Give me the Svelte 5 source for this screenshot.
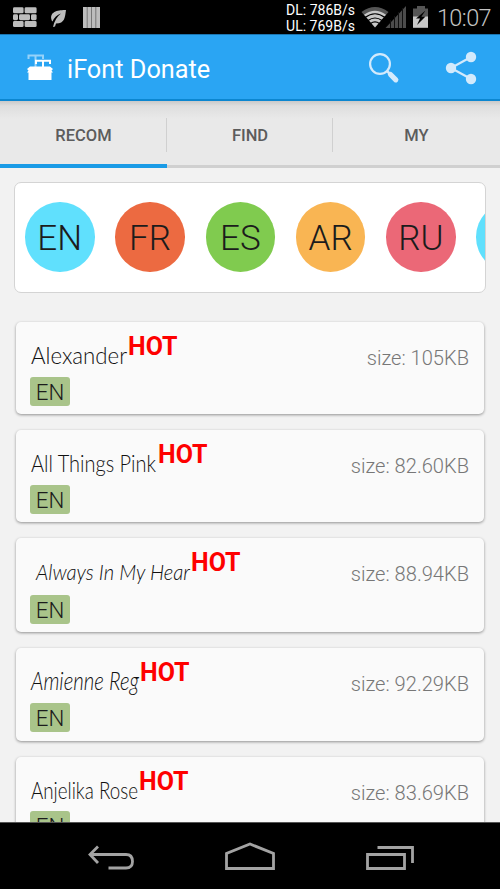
<script lang="ts">
  const tabs = ['RECOM', 'FIND', 'MY'];
  let active = $state(0);

  const languages = [
    { code: 'EN', color: 'cyan' },
    { code: 'FR', color: 'orange' },
    { code: 'ES', color: 'green' },
    { code: 'AR', color: 'amber' },
    { code: 'RU', color: 'pink' },
    { code: '', color: 'cyan' }
  ];

  // width is the measured width of the preview, row the height of its line
  const fonts = [
    { name: 'Alexander', face: 'light', size: '105KB', width: 97, text: 96, row: 55, height: 92 },
    { name: 'All Things Pink', face: 'marker', size: '82.60KB', width: 127, text: 125, row: 55, height: 92 },
    { name: 'Always In My Hear', face: 'script', size: '88.94KB', width: 160, text: 154, indent: 5, row: 57, height: 94 },
    { name: 'Amienne Reg', face: 'brush', size: '92.29KB', width: 109, text: 108, row: 55, height: 93 },
    { name: 'Anjelika Rose', face: 'narrow', size: '83.69KB', width: 108, text: 107, row: 54, height: 93 }
  ];
</script>

<div class="screen">
  <div class="status">
    <svg class="notifications" width="104" height="34" viewBox="0 0 104 34">
      <g fill="#bdbdbd">
        <rect x="13" y="7.3" width="10.6" height="6" rx="1.4" />
        <rect x="24.6" y="7.3" width="12" height="6" rx="1.4" />
        <rect x="13" y="14.2" width="5" height="6" rx="1.4" />
        <rect x="19" y="14.2" width="11" height="6" rx="1.4" />
        <rect x="31" y="14.2" width="5.6" height="6" rx="1.4" />
        <rect x="13" y="21.1" width="10.6" height="6" rx="1.4" />
        <rect x="24.6" y="21.1" width="12" height="6" rx="1.4" />
        <path d="M66 10C59 10 50 11 51.300 19Q51.700 21 52.500 21.500Q55 15.500 61 13.500Q55 18 53 27L55 26.500L56 23.500C65 23.500 65 17 66 10Z" />
        <rect x="83" y="7" width="17" height="21" />
      </g>
      <path d="M87.200 7V28M91.500 7V28M95.800 7V28" stroke="#777" stroke-width="1" />
    </svg>
    <div class="traffic">
      <span>DL: 786B/s</span>
      <span>UL: 769B/s</span>
    </div>
    <svg class="signals" width="72" height="34" viewBox="0 0 72 34">
      <path d="M.5 12Q14 2 27.500 12L24.500 15.500Q14 8 3.500 15.500Z" fill="#555" />
      <path d="M3 14.800Q14 6.500 25 14.800L14 27.500Z" fill="#c8c8c8" />
      <path d="M4 17.500Q14 10 24 17.500M7 20.500Q14 15.500 21 20.500M9.500 23.500Q14 20.300 18.500 23.500" fill="none" stroke="#000" stroke-width="1.200" />
      <path d="M45 6V28H24.500Z" fill="#4c4c4c" />
      <path d="M29.500 20V28M33.500 16V28M37.500 12V28M41.500 8V28" stroke="#111" stroke-width="1" />
      <path d="M56 6H64V8.500H67V17H52V8.500H56Z" fill="#555" />
      <rect x="52" y="16.500" width="15" height="11.300" fill="#c8c8c8" />
      <path d="M64.500 10.500L55 18.500H59L56 25L64.500 16.500H60.500Z" fill="#000" />
    </svg>
    <span class="clock">10:07</span>
  </div>

  <header>
    <svg class="logo" width="28" height="28" viewBox="0 0 28 28">
      <g fill="none" stroke="#fff" stroke-width="2">
        <path d="M2.500 6V2.500H17V6M9.500 2.500V14" opacity="0.5" />
        <path d="M10 11V7.800H24V11M17 7.800V14" />
      </g>
      <path d="M4 13.500L1 16L2.500 17.500L1 19.500H2.500V27H25.500V19.500H27L25.500 17.500L27 16L24 13.500Z" fill="#fff" />
    </svg>
    <h1>iFont Donate</h1>
    <svg class="search" width="32" height="32" viewBox="0 0 32 32">
      <circle cx="12" cy="12" r="9.900" fill="none" stroke="#d3eafc" stroke-width="2.200" />
      <path d="M18.500 18.500L23 23" stroke="#d3eafc" stroke-width="2.500" />
      <path d="M22.500 22.500L27.800 27.800" stroke="#d3eafc" stroke-width="5.200" stroke-linecap="round" />
    </svg>
    <svg class="share" width="32" height="34" viewBox="0 0 32 34">
      <path d="M26 6L6 17L26 28" fill="none" stroke="#d3eafc" stroke-width="2.200" />
      <g fill="#d3eafc">
        <circle cx="26" cy="6" r="5.200" />
        <circle cx="6" cy="17" r="5.200" />
        <circle cx="26" cy="28" r="5.200" />
      </g>
    </svg>
  </header>

  <nav class="tabs">
    {#each tabs as tab, i}
      <button class:active={active === i} onclick={() => (active = i)}>{tab}</button>
    {/each}
  </nav>

  <main>
    <div class="languages">
      {#each languages as language}
        <div class="circle {language.color}">{language.code}</div>
      {/each}
    </div>

    <div class="list">
      {#each fonts as font}
        <article style="height: {font.height}px">
          <div class="row" style="height: {font.row}px">
            <svg class="preview" width={font.width} height="55">
              <text class={font.face} x={font.indent ?? 0} y="42" textLength={font.text} lengthAdjust="spacingAndGlyphs">{font.name}</text>
            </svg>
            <span class="hot">HOT</span>
            <span class="size">size: {font.size}</span>
          </div>
          <span class="badge">EN</span>
        </article>
      {/each}
    </div>
  </main>

  <footer>
    <svg width="500" height="66" viewBox="0 0 500 66" fill="none" stroke="#a3a3a3" stroke-width="2.800">
      <path d="M98 23.500L90 31.500L98 40M90 31.500H126Q132.500 31.500 132.500 38.500Q132.500 45 126 45H108.500" />
      <path d="M226.500 45.500V30.500L250 21L273.500 30.500V45.500Z" />
      <path d="M367.500 31.500H404.500V45.500H367.500ZM377.500 24.500H412.500V40" />
    </svg>
  </footer>
</div>

<style>
  :global(body) {
    margin: 0;
    background: #000;
  }

  .screen {
    width: 500px;
    height: 889px;
    display: flex;
    flex-direction: column;
    overflow: hidden;
    background: #f2f2f2;
    font-family: Roboto, sans-serif;
  }

  svg {
    display: block;
    flex: none;
  }

  .status {
    height: 34px;
    flex: none;
    display: flex;
    align-items: center;
    background: #000;
  }

  .traffic {
    margin-left: auto;
    display: flex;
    flex-direction: column;
    color: #fff;
    font-size: 14px;
    line-height: 16.5px;
    padding-top: 2px;
    font-weight: 400;
  }

  .signals {
    margin-left: 6px;
  }

  .clock {
    width: 56px;
    margin: 2px 9px 0 2px;
    color: #c4c4c4;
    font-size: 23.5px;
    font-weight: 300;
    letter-spacing: -0.6px;
    text-align: right;
    white-space: nowrap;
  }

  header {
    height: 67px;
    flex: none;
    box-sizing: border-box;
    display: flex;
    align-items: center;
    padding: 0 23px 0 26px;
    background: #2aa5f3;
    border-top: 1px solid #1b75b0;
    border-bottom: 2px solid #0b86d0;
  }

  h1 {
    margin: 4px auto 0 13px;
    color: #fff;
    font-size: 25.3px;
    font-weight: 400;
  }

  .search {
    margin: 2px 45px 0 0;
  }

  .share {
    margin-top: 2px;
  }

  .tabs {
    height: 67px;
    flex: none;
    display: grid;
    grid-template-columns: 167px 166px 167px;
    background: linear-gradient(#c9c9c9, #dedede 5px, #e9e9e9 18px);
  }

  .tabs button {
    margin: 0;
    padding: 5px 0 0;
    border: 0;
    border-bottom: 3px solid #d0d0d0;
    background: linear-gradient(#d0d0d0, #d0d0d0) right 17px / 1.5px 34px no-repeat;
    color: #5c5c5c;
    font: 500 16.5px Roboto, sans-serif;
  }

  .tabs button:last-child {
    background: none;
  }

  .tabs button.active {
    padding-top: 6px;
    border-bottom: 4px solid #1a9be6;
  }

  main {
    flex: 1;
    min-height: 0;
    overflow: hidden;
    padding: 14px 14px 0;
  }

  .languages {
    height: 111px;
    box-sizing: border-box;
    display: flex;
    align-items: center;
    gap: 20.8px;
    padding: 0 0 1px 10px;
    overflow: hidden;
    background: #fff;
    border: 1px solid #d4d4d4;
    border-radius: 7px;
  }

  .circle {
    width: 69.5px;
    height: 69.5px;
    flex: none;
    border-radius: 50%;
    color: #1c1c1c;
    font-size: 35px;
    line-height: 73px;
    font-weight: 300;
    text-align: center;
  }

  .cyan { background: #60e0fd; }
  .orange { background: #ec6a41; }
  .green { background: #80cb4f; }
  .amber { background: #f9b553; }
  .pink { background: #eb6877; }

  .list {
    display: flex;
    flex-direction: column;
    gap: 16px;
    padding: 29px 2px 0;
  }

  article {
    flex: none;
    box-sizing: border-box;
    padding: 0 15px;
    background: #fafafa;
    border-radius: 5px;
    box-shadow: 0 1px 3px rgba(0, 0, 0, 0.4);
  }

  .row {
    display: flex;
    align-items: flex-start;
  }

  .preview {
    overflow: visible;
  }

  .preview text {
    fill: #111;
  }

  .light { font: 300 23px Lato, sans-serif; }
  .marker { font: 300 24px Lato, sans-serif; }
  .script { font: italic 300 21px Lato, sans-serif; }
  .brush { font: italic 300 25px Lato, sans-serif; }
  .narrow { font: 300 23px Lato, sans-serif; }

  .hot {
    margin-top: 10px;
    color: #fe0000;
    font-size: 25px;
    line-height: 29px;
    font-weight: 700;
  }

  .size {
    margin: 24px 0 0 auto;
    color: #777;
    font-size: 20.1px;
    line-height: 24px;
    font-weight: 300;
  }

  .badge {
    display: block;
    width: 40px;
    height: 29px;
    margin-left: -1px;
    border-radius: 3px;
    background: #a9c48a;
    color: #1c1c1c;
    font-size: 22.3px;
    line-height: 31px;
    font-weight: 300;
    text-align: center;
  }

  footer {
    height: 66px;
    flex: none;
    background: #000;
    border-top: 1px solid #555;
  }
</style>
